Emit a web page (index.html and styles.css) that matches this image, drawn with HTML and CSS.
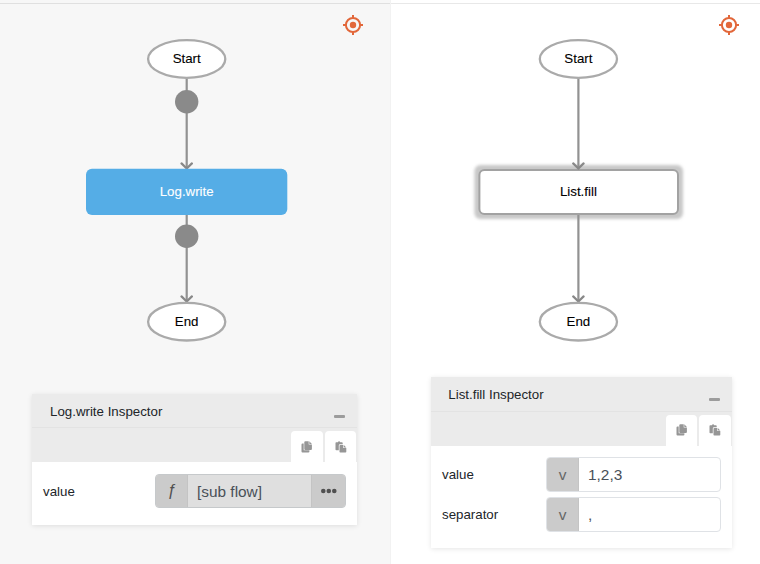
FILE: index.html
```html
<!DOCTYPE html>
<html lang="en">
<head>
<meta charset="utf-8">
<title>Flow editor</title>
<link rel="stylesheet" href="styles.css">
</head>
<body>
<svg class="defs" width="0" height="0" aria-hidden="true">
  <symbol id="locate" viewBox="0 0 20 20">
    <circle cx="10" cy="10" r="7.1" fill="none" stroke="currentColor" stroke-width="2"/>
    <circle cx="10" cy="10" r="3.2" fill="currentColor"/>
    <path d="M10 0v3M10 17v3M0 10h3M17 10h3" stroke="currentColor" stroke-width="2"/>
  </symbol>
  <symbol id="copy" viewBox="0 0 12 12">
    <path d="M1.5 2.5H2.7V9.3H8.4V10.6a1 1 0 0 1-1 1H1.5a1 1 0 0 1-1-1V3.5a1 1 0 0 1 1-1Z" fill="currentColor"/>
    <path d="M4.3.3H7.7V3.5H10.9V7.9a1 1 0 0 1-1 1H4.3a1 1 0 0 1-1-1V1.3a1 1 0 0 1 1-1ZM8.3.3 10.9 2.9H8.3Z" fill="currentColor"/>
  </symbol>
  <symbol id="paste" viewBox="0 0 12 12">
    <path d="M1.3 1.2H2.9a1.2 1.2 0 0 1 2.3 0H6.9a.8.8 0 0 1 .8.8V3.2H5a1.2 1.2 0 0 0-1.2 1.2V9.2H1.3a.8.8 0 0 1-.8-.8V2a.8.8 0 0 1 .8-.8Z" fill="currentColor"/>
    <path d="M5.3 4H8.2V6.9H11.3V10.8a.8.8 0 0 1-.8.8H5.3a.8.8 0 0 1-.8-.8V4.8a.8.8 0 0 1 .8-.8ZM8.8 4 11.3 6.4H8.8Z" fill="currentColor"/>
  </symbol>
  <filter id="halo" x="-10%" y="-30%" width="120%" height="160%"><feGaussianBlur stdDeviation="1.8"/></filter>
</svg>
<main class="editor">
  <section class="pane pane-left">
    <svg class="locate"><use href="#locate"/></svg>
    <svg class="flow" viewBox="0 0 390 346">
      <path class="edge" d="M186.7 78V168M186.7 215V301.5"/>
      <path class="arrow" d="M181.5 163.4 186.7 168.5 191.9 163.4M181.5 296.4 186.7 301.5 191.9 296.4"/>
      <circle class="port" cx="186.7" cy="101.7" r="11.7"/>
      <circle class="port" cx="186.7" cy="236.3" r="11.7"/>
      <ellipse class="terminal" cx="186.7" cy="59" rx="38.6" ry="18.8"/>
      <text x="186.7" y="63">Start</text>
      <rect class="step-active" x="86" y="168.7" width="201.3" height="46.3" rx="6"/>
      <text class="light" x="186.7" y="196">Log.write</text>
      <ellipse class="terminal" cx="186.7" cy="321.7" rx="38.6" ry="18.8"/>
      <text x="186.7" y="325.6">End</text>
    </svg>
    <article class="inspector">
      <header class="title"><span>Log.write Inspector</span><i class="minimize"></i></header>
      <nav class="tabs">
        <span class="tab"><svg><use href="#copy"/></svg></span>
        <span class="tab"><svg><use href="#paste"/></svg></span>
      </nav>
      <div class="fields">
        <div class="field">
          <label>value</label>
          <div class="control filled"><span class="kind fn">ƒ</span><span class="entry">[sub flow]</span><span class="more"><svg viewBox="0 0 16 6"><circle cx="2.3" cy="3" r="2.3"/><circle cx="7.8" cy="3" r="2.3"/><circle cx="13.3" cy="3" r="2.3"/></svg></span></div>
        </div>
      </div>
    </article>
  </section>
  <section class="pane pane-right">
    <svg class="locate"><use href="#locate"/></svg>
    <svg class="flow" viewBox="390 0 370 346">
      <rect class="halo" x="474.4" y="165" width="208.6" height="54" rx="6"/>
      <path class="edge" d="M578.4 78V168M578.4 215V301.5"/>
      <rect class="step" x="479.4" y="170" width="198.6" height="44" rx="5"/>
      <path class="arrow" d="M573.2 163.4 578.4 168.5 583.6 163.4M573.2 296.4 578.4 301.5 583.6 296.4"/>
      <ellipse class="terminal" cx="578.4" cy="59" rx="38.6" ry="18.8"/>
      <text x="578.4" y="63">Start</text>
      <text x="578.4" y="196">List.fill</text>
      <ellipse class="terminal" cx="578.4" cy="321.7" rx="38.6" ry="18.8"/>
      <text x="578.4" y="325.6">End</text>
    </svg>
    <article class="inspector">
      <header class="title"><span>List.fill Inspector</span><i class="minimize"></i></header>
      <nav class="tabs">
        <span class="tab"><svg><use href="#copy"/></svg></span>
        <span class="tab"><svg><use href="#paste"/></svg></span>
      </nav>
      <div class="fields">
        <div class="field">
          <label>value</label>
          <div class="control"><span class="kind">v</span><span class="entry">1,2,3</span></div>
        </div>
        <div class="field">
          <label>separator</label>
          <div class="control"><span class="kind">v</span><span class="entry">,</span></div>
        </div>
      </div>
    </article>
  </section>
</main>
</body>
</html>
```
FILE: styles.css
```css
* { box-sizing: border-box; }
body {
  margin: 0;
  font: 13.3px/20px "Liberation Sans", Arial, sans-serif;
  color: #212529;
  background: #fff;
}
.defs { position: absolute; }
.editor {
  display: grid;
  grid-template-columns: 391px 369px;
  height: 564px;
  overflow: hidden;
  background: linear-gradient(#e8e8e8, #e8e8e8) 0 3px / 100% 1px no-repeat;
}
.pane { position: relative; }
.pane-left { background: rgba(0, 0, 0, .03); border-right: 1px solid #f2f2f2; }
.locate {
  position: absolute;
  top: 15.3px;
  right: 27px;
  width: 20px;
  height: 20px;
  color: #e2673a;
}
.pane-right .locate { right: 21px; }
.flow { display: block; width: 390px; height: 346px; }
.pane-right .flow { width: 370px; margin-left: -1px; }
.flow text { font-size: 13.3px; text-anchor: middle; fill: #000; stroke: #000; stroke-width: .1; }
.flow .light { fill: #fff; stroke: #fff; }
.edge { stroke: #929292; stroke-width: 2.2; }
.arrow { fill: none; stroke: #888; stroke-width: 2.2; stroke-linecap: round; }
.port { fill: #8a8a8a; }
.terminal { fill: #fff; stroke: #aaa; stroke-width: 2.3; }
.step-active { fill: #55ade6; }
.step { fill: #fff; stroke: #a2a2a2; stroke-width: 2; }
.halo { fill: #c8c8c8; filter: url(#halo); }

.inspector { background: #fff; box-shadow: 0 1px 5px rgba(0, 0, 0, .1); }
.pane-left .inspector { width: 325px; height: 130.5px; margin: 48px 0 0 32px; }
.pane-right .inspector { width: 301px; height: 170.5px; margin: 31.3px 0 0 40px; }
.title {
  display: flex;
  justify-content: space-between;
  height: 34.3px;
  padding: 7.5px 12px 0 18px;
  background: #ebebeb;
  border-bottom: 1px solid #e3e3e3;
}
.pane-right .title { padding-left: 17.3px; }
.minimize { width: 11px; height: 3px; margin-top: 13.5px; border-radius: 1px; background: #9c9c9c; }
.tabs {
  display: flex;
  justify-content: flex-end;
  align-items: flex-end;
  gap: 2px;
  height: 34px;
  padding-right: .8px;
  background: #ebebeb;
}
.pane-right .tabs { padding-right: 1px; }
.tab {
  display: flex;
  align-items: center;
  justify-content: center;
  width: 31.6px;
  height: 31px;
  padding-left: 1px;
  border-radius: 4px 4px 0 0;
  background: #fff;
  color: #969696;
}
.pane-right .tab { padding-left: 0; }
.tab svg { width: 12px; height: 12px; }
.fields { display: grid; gap: 5.3px; padding: 11.3px 11px 0; }
.field { display: flex; align-items: center; justify-content: space-between; height: 34.7px; }
.field label { padding-top: 2px; }
.control {
  display: flex;
  width: 191px;
  height: 34.7px;
  border: 1px solid #dfe2e6;
  border-radius: 4px;
  overflow: hidden;
  font-size: 15.4px;
  line-height: 33px;
  color: #495057;
}
.pane-right .control { width: 175px; }
.kind, .more {
  display: flex;
  align-items: center;
  justify-content: center;
  width: 32px;
  background: #cbcbcb;
  color: #666;
}
.kind { border-right: 1px solid #c4c4c4; }
.fn { color: #505050; font-style: italic; font-size: 16px; }
.entry { flex: 1; padding-left: 9px; }
.filled { border-color: #c6c9cb; background: #dfdfdf; }
.more { width: 34px; border-left: 1px solid #c4c4c4; }
.more svg { width: 16px; height: 6px; fill: #505050; }
```
